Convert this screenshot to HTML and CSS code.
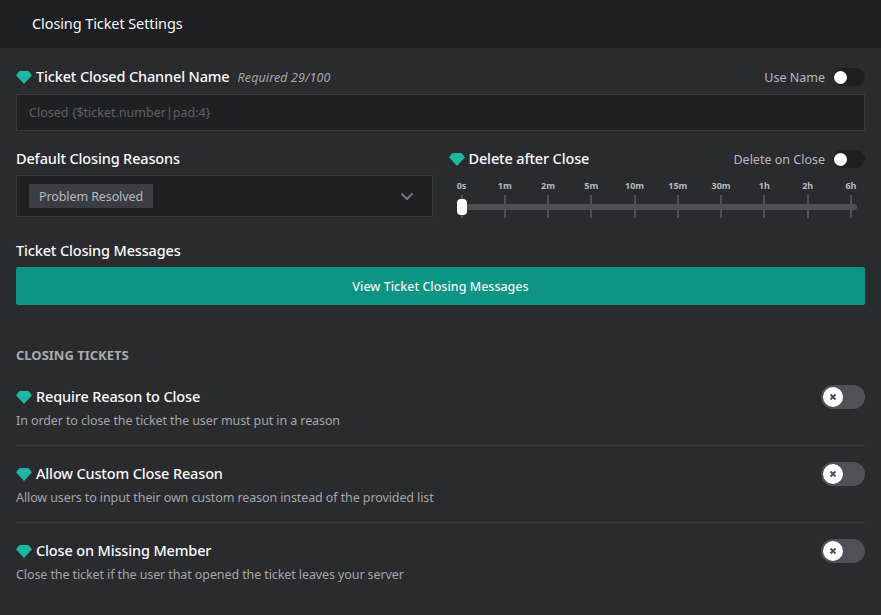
FILE: index.html
```html
<!DOCTYPE html>
<html lang="en">
<head>
<meta charset="UTF-8">
<meta name="viewport" content="width=device-width, initial-scale=1.0">
<title>Closing Ticket Settings</title>
<link rel="stylesheet" href="styles.css">
</head>
<body>

<div class="header">Closing Ticket Settings</div>

<div class="content">
  <div class="fieldHead channelHead">
    <div class="labelGroup">
      <svg class="gem" viewBox="0 0 16 13"><path d="M3.6 0h8.8L16 4.2 8 13 0 4.2z"/></svg>
      <span class="label">Ticket Closed Channel Name</span>
      <span class="hint">Required 29/100</span>
    </div>
    <div class="switchGroup">
      <span class="switchText">Use Name</span>
      <span class="switch"><span class="knob"></span></span>
    </div>
  </div>
  <div class="textInput">Closed {$ticket.number|pad:4}</div>

  <div class="twoCols">
    <div class="col">
      <div class="fieldHead"><span class="label">Default Closing Reasons</span></div>
      <div class="select">
        <span class="tag">Problem Resolved</span>
        <svg class="chevron" viewBox="0 0 14 9"><path d="M1.5 1.5 7 7l5.5-5.5"/></svg>
      </div>
    </div>
    <div class="col">
      <div class="fieldHead">
        <div class="labelGroup">
          <svg class="gem" viewBox="0 0 16 13"><path d="M3.6 0h8.8L16 4.2 8 13 0 4.2z"/></svg>
          <span class="label">Delete after Close</span>
        </div>
        <div class="switchGroup">
          <span class="switchText">Delete on Close</span>
          <span class="switch"><span class="knob"></span></span>
        </div>
      </div>
      <div class="slider">
        <div class="marks">
          <span class="mark">0s</span>
          <span class="mark">1m</span>
          <span class="mark">2m</span>
          <span class="mark">5m</span>
          <span class="mark">10m</span>
          <span class="mark">15m</span>
          <span class="mark">30m</span>
          <span class="mark">1h</span>
          <span class="mark">2h</span>
          <span class="mark">6h</span>
        </div>
        <div class="track"></div>
        <div class="handle"></div>
      </div>
    </div>
  </div>

  <div class="fieldHead messagesHead"><span class="label">Ticket Closing Messages</span></div>
  <button class="primaryBtn" type="button">View Ticket Closing Messages</button>

  <h3 class="sectionTitle">CLOSING TICKETS</h3>

  <div class="optionRow">
    <div>
      <div class="labelGroup">
        <svg class="gem" viewBox="0 0 16 13"><path d="M3.6 0h8.8L16 4.2 8 13 0 4.2z"/></svg>
        <span class="label">Require Reason to Close</span>
      </div>
      <div class="desc">In order to close the ticket the user must put in a reason</div>
    </div>
    <span class="bigSwitch"><span class="bigKnob"><svg viewBox="0 0 8 8"><path d="M1.5 1.5l5 5M6.5 1.5l-5 5"/></svg></span></span>
  </div>
  <div class="optionRow">
    <div>
      <div class="labelGroup">
        <svg class="gem" viewBox="0 0 16 13"><path d="M3.6 0h8.8L16 4.2 8 13 0 4.2z"/></svg>
        <span class="label">Allow Custom Close Reason</span>
      </div>
      <div class="desc">Allow users to input their own custom reason instead of the provided list</div>
    </div>
    <span class="bigSwitch"><span class="bigKnob"><svg viewBox="0 0 8 8"><path d="M1.5 1.5l5 5M6.5 1.5l-5 5"/></svg></span></span>
  </div>
  <div class="optionRow">
    <div>
      <div class="labelGroup">
        <svg class="gem" viewBox="0 0 16 13"><path d="M3.6 0h8.8L16 4.2 8 13 0 4.2z"/></svg>
        <span class="label">Close on Missing Member</span>
      </div>
      <div class="desc">Close the ticket if the user that opened the ticket leaves your server</div>
    </div>
    <span class="bigSwitch"><span class="bigKnob"><svg viewBox="0 0 8 8"><path d="M1.5 1.5l5 5M6.5 1.5l-5 5"/></svg></span></span>
  </div>
</div>

</body>
</html>
```

FILE: styles.css
```css
body {
  font-family: "Noto Sans", "Open Sans", sans-serif;
  background-color: #292b2f;
  color: #fff;
  margin: 0;
  padding: 0;
  height: 615px;
  overflow: hidden;
}

.header {
  height: 48px;
  line-height: 47px;
  padding-left: 32px;
  background-color: #1e1f22;
  font-size: 14.5px;
  letter-spacing: -0.1px;
  color: #f6f6f7;
}

.content {
  padding: 0 16px;
}

.fieldHead {
  display: flex;
  justify-content: space-between;
  align-items: center;
  height: 20px;
}

.channelHead {
  margin-top: 19px;
}

.labelGroup {
  display: flex;
  align-items: center;
  height: 20px;
}

.gem {
  width: 16px;
  height: 13px;
  margin-right: 4px;
  fill: #1cb8a4;
  flex: none;
}

.label {
  padding-bottom: 2px;
  font-size: 14.5px;
  font-weight: 500;
  letter-spacing: -0.15px;
  color: #f9f9f9;
}

.hint {
  margin-left: 8px;
  font-size: 12.5px;
  font-style: italic;
  letter-spacing: 0.1px;
  color: #a3a6aa;
}

.switchGroup {
  display: flex;
  align-items: center;
  gap: 8px;
}

.switchText {
  font-size: 12.5px;
  color: #b5bac1;
}

.switch {
  display: flex;
  align-items: center;
  width: 32px;
  height: 18px;
  background-color: #1e1f22;
  border-radius: 9px;
}

.knob {
  width: 13px;
  height: 13px;
  margin-left: 1px;
  background-color: #fff;
  border-radius: 50%;
}

.textInput {
  height: 35px;
  line-height: 35px;
  margin-top: 7px;
  padding-left: 12px;
  background-color: #1f2023;
  border: 1px solid #36383c;
  font-size: 12.5px;
  color: #5d6066;
}

.twoCols {
  display: flex;
  gap: 16px;
  margin-top: 18px;
}

.col {
  flex: 1;
  min-width: 0;
}

.select {
  display: flex;
  justify-content: space-between;
  align-items: center;
  height: 40px;
  margin-top: 6px;
  padding: 0 18px 0 12px;
  background-color: #1f2023;
  border: 1px solid #36383c;
}

.tag {
  padding: 0 10px;
  height: 24px;
  line-height: 25px;
  background-color: #3a3d42;
  font-size: 12.5px;
  letter-spacing: -0.1px;
  color: #b5bac1;
}

.chevron {
  width: 14px;
  height: 9px;
  fill: none;
  stroke: #72767d;
  stroke-width: 2;
}

.slider {
  position: relative;
  margin-top: 11px;
}

.marks {
  display: flex;
  justify-content: space-between;
  padding: 0 7px 0 6px;
}

.mark {
  position: relative;
  width: 14px;
  height: 36px;
  text-align: center;
  white-space: nowrap;
  font-size: 9px;
  line-height: 11px;
  font-weight: 700;
  color: #b5bac1;
  display: flex;
  justify-content: center;
}

.mark::after {
  content: "";
  position: absolute;
  left: 6px;
  top: 15px;
  width: 2px;
  height: 23px;
  background-color: #4e5157;
}

.track {
  position: absolute;
  left: 13px;
  right: 8px;
  top: 24px;
  height: 6px;
  background-color: #4e5157;
  border-radius: 3px;
}

.handle {
  position: absolute;
  left: 8px;
  top: 19px;
  width: 10px;
  height: 16px;
  background-color: #fff;
  border-radius: 4px;
}

.messagesHead {
  margin-top: 24px;
}

.primaryBtn {
  display: block;
  width: 100%;
  height: 38px;
  margin-top: 6px;
  background-color: #0e9484;
  border: none;
  border-radius: 2px;
  font-family: inherit;
  font-size: 12.5px;
  font-weight: 500;
  color: #f2f3f5;
}

.sectionTitle {
  margin: 42px 0 6px;
  height: 16px;
  line-height: 16px;
  font-size: 13px;
  font-weight: 700;
  color: #a9abaf;
}

.optionRow {
  display: flex;
  justify-content: space-between;
  align-items: flex-start;
  box-sizing: border-box;
  height: 77px;
  padding-top: 18px;
  border-bottom: 1px solid #37393d;
}

.optionRow:last-child {
  border-bottom: none;
}

.desc {
  margin-top: 5px;
  font-size: 12.5px;
  line-height: 17px;
  letter-spacing: -0.1px;
  color: #a3a6aa;
}

.bigSwitch {
  display: flex;
  align-items: center;
  width: 44px;
  height: 24px;
  margin-top: -2px;
  background-color: #4e5157;
  border-radius: 12px;
}

.bigKnob {
  display: flex;
  align-items: center;
  justify-content: center;
  width: 20px;
  height: 20px;
  margin-left: 2px;
  background-color: #fff;
  border-radius: 50%;
}

.bigKnob svg {
  width: 8px;
  height: 8px;
  fill: none;
  stroke: #4e5157;
  stroke-width: 2;
}
```
